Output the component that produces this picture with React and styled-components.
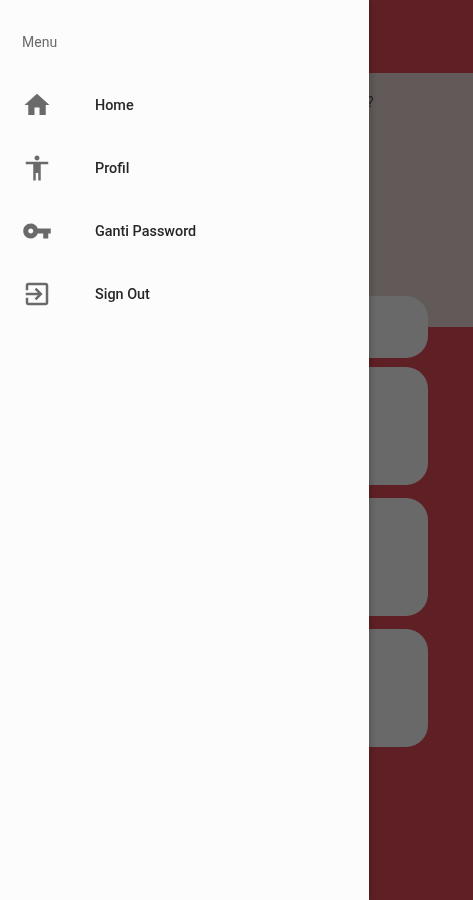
import styled, { createGlobalStyle } from 'styled-components';

const GlobalStyle = createGlobalStyle`
  html, body {
    margin: 0;
    padding: 0;
    height: 100%;
    overflow: hidden;
  }
  body {
    font-family: Roboto, 'Liberation Sans', sans-serif;
  }
`;

const Screen = styled.div`
  position: relative;
  width: 473px;
  height: 900px;
  overflow: hidden;
  background: #5f2025;
`;

const HeaderGap = styled.div`
  height: 73px;
`;

const InfoPanel = styled.div`
  height: 254px;
  box-sizing: border-box;
  background: #625a58;
  padding: 19px 0 0 367px;
`;

const PanelText = styled.span`
  display: inline-block;
  font-size: 14px;
  line-height: 16px;
  color: #222;
  filter: blur(0.4px);
`;

const CardList = styled.div`
  display: flex;
  flex-direction: column;
  margin-top: -31px;
  padding: 0 45px 0 20px;
`;

const Card = styled.div`
  height: ${(p) => p.$height}px;
  margin-bottom: ${(p) => p.$gap}px;
  background: #696969;
  border-radius: 22px;
`;

const Drawer = styled.nav`
  position: absolute;
  top: 0;
  left: 0;
  bottom: 0;
  width: 369px;
  background: #fcfcfc;
  box-shadow: 1px 0 7px rgba(0, 0, 0, 0.25);
`;

const DrawerTitle = styled.div`
  height: 73px;
  box-sizing: border-box;
  padding: 34px 0 0 22px;
  font-size: 14px;
  line-height: 16px;
  color: #6b6b6b;
  filter: blur(0.35px);
`;

const MenuRow = styled.div`
  display: flex;
  align-items: center;
  height: 63px;
  padding-left: 22px;
`;

const MenuIcon = styled.svg`
  width: 30px;
  height: 30px;
  fill: #6a6a6a;
  flex-shrink: 0;
  filter: blur(0.35px);
`;

const MenuLabel = styled.span`
  margin: 1px 0 0 43px;
  font-size: 14.4px;
  font-weight: 500;
  color: #262626;
  filter: blur(0.35px);
`;

const menuItems = [
  {
    label: 'Home',
    path: 'M10 20v-6h4v6h5v-8h3L12 3 2 12h3v8z',
  },
  {
    label: 'Profil',
    path: 'M12 2c1.1 0 2 .9 2 2s-.9 2-2 2-2-.9-2-2 .9-2 2-2zm9 7h-6v13h-2v-6h-2v6H9V9H3V7h18v2z',
  },
  {
    label: 'Ganti Password',
    path: 'M12.65 10C11.83 7.67 9.61 6 7 6c-3.31 0-6 2.69-6 6s2.69 6 6 6c2.61 0 4.83-1.67 5.65-4H17v4h4v-4h2v-4H12.65zM7 14c-1.1 0-2-.9-2-2s.9-2 2-2 2 .9 2 2-.9 2-2 2z',
  },
  {
    label: 'Sign Out',
    path: 'M10.09 15.59L11.5 17l5-5-5-5-1.41 1.41L12.67 11H3v2h9.67l-2.58 2.59zM19 3H5c-1.11 0-2 .9-2 2v4h2V5h14v14H5v-4H3v4c0 1.1.89 2 2 2h14c1.1 0 2-.9 2-2V5c0-1.1-.9-2-2-2z',
  },
];

const App = () => {
  return (
    <Screen>
      <GlobalStyle />
      <HeaderGap />
      <InfoPanel>
        <PanelText>?</PanelText>
      </InfoPanel>
      <CardList>
        <Card $height={62} $gap={9} />
        <Card $height={118} $gap={13} />
        <Card $height={118} $gap={13} />
        <Card $height={118} $gap={0} />
      </CardList>
      <Drawer>
        <DrawerTitle>Menu</DrawerTitle>
        {menuItems.map((item) => (
          <MenuRow key={item.label}>
            <MenuIcon viewBox='0 0 24 24'>
              <path d={item.path} />
            </MenuIcon>
            <MenuLabel>{item.label}</MenuLabel>
          </MenuRow>
        ))}
      </Drawer>
    </Screen>
  );
};

export default App;
